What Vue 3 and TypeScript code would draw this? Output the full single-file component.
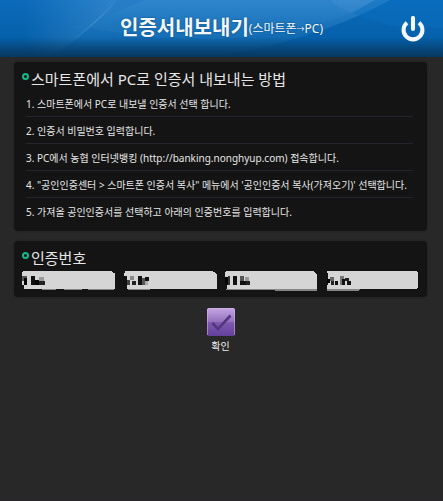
<script setup lang="ts">
import { reactive } from 'vue'

interface Block {
  x: number
  y: number
  w: number
  h: number
  fill: string
}

interface CodeField {
  id: string
  value: string
  shape: string
  shade: string
  blocks: Block[]
}

const steps: string[] = [
  '스마트폰에서 PC로 내보낼 인증서 선택 합니다.',
  '인증서 비밀번호 입력합니다.',
  'PC에서 농협 인터넷뱅킹 (http://banking.nonghyup.com) 접속합니다.',
  '"공인인증센터 > 스마트폰 인증서 복사" 메뉴에서 \'공인인증서 복사(가져오기)\' 선택합니다.',
  '가져올 공인인증서를 선택하고 아래의 인증번호를 입력합니다.',
]

const b = (x: number, y: number, w: number, h: number, fill: string): Block => ({ x, y, w, h, fill })

const fields = reactive<CodeField[]>([
  {
    id: 'code-1',
    value: '',
    shape: 'M2 0H90L94 3V18H2V14H0V2Z',
    shade: 'M20 18H34V19H20ZM42 18H60V19H42ZM66 18H92V19H66Z',
    blocks: [
      b(0, 5, 5, 5, '#555'), b(2, 7, 3, 7, '#050505'), b(9, 5, 4, 9, '#111'),
      b(13, 9, 4, 5, '#080808'), b(17, 6, 5, 4, '#999'), b(17, 10, 6, 4, '#222'),
    ],
  },
  {
    id: 'code-2',
    value: '',
    shape: 'M1 0H89L93 3V18H3V14H0V5Z',
    shade: 'M4 18H26V19H4Z',
    blocks: [
      b(0, 5, 3, 9, '#111'), b(3, 9, 3, 5, '#444'), b(6, 5, 4, 4, '#888'),
      b(8, 10, 4, 4, '#222'), b(14, 5, 4, 9, '#111'), b(18, 7, 3, 7, '#555'),
      b(21, 6, 4, 4, '#111'), b(21, 10, 3, 4, '#aaa'),
    ],
  },
  {
    id: 'code-3',
    value: '',
    shape: 'M1 0H89L92 3V18H2V14H0V2Z',
    shade: 'M1 18H92V20H50V19H1Z',
    blocks: [
      b(0, 6, 3, 8, '#050505'), b(3, 5, 2, 9, '#333'), b(8, 5, 4, 9, '#111'),
      b(15, 5, 4, 5, '#555'), b(15, 10, 6, 4, '#111'), b(20, 6, 4, 4, '#999'),
      b(21, 10, 4, 4, '#222'),
    ],
  },
  {
    id: 'code-4',
    value: '',
    shape: 'M0 0H90L91 1V17L90 18H0V14H1V3Z',
    shade: 'M0 18H34L32 20H0Z',
    blocks: [
      b(0, 8, 3, 4, '#050505'), b(3, 6, 4, 4, '#666'), b(4, 10, 3, 4, '#222'),
      b(8, 10, 3, 4, '#111'), b(13, 5, 4, 9, '#777'), b(15, 8, 3, 6, '#111'),
      b(18, 7, 4, 3, '#222'), b(20, 10, 4, 4, '#111'),
    ],
  },
])
</script>

<template>
  <div class="page">
    <header class="header">
      <svg class="backdrop" viewBox="0 0 443 57" preserveAspectRatio="none" aria-hidden="true">
        <defs>
          <linearGradient id="sky" x1="0" y1="0" x2="0" y2="1">
            <stop offset="0" stop-color="#0b6abb" />
            <stop offset="0.7" stop-color="#0560aa" />
            <stop offset="1" stop-color="#06569a" />
          </linearGradient>
          <linearGradient id="glow" x1="0" y1="0" x2="0" y2="1">
            <stop offset="0" stop-color="#8cc8f4" stop-opacity="0.26" />
            <stop offset="1" stop-color="#5aaee8" stop-opacity="0.04" />
          </linearGradient>
          <linearGradient id="beam" x1="0" y1="0" x2="1" y2="0">
            <stop offset="0.2" stop-color="#8cc8f4" stop-opacity="0" />
            <stop offset="1" stop-color="#8cc8f4" stop-opacity="0.28" />
          </linearGradient>
          <linearGradient id="floor" x1="0" y1="0" x2="0" y2="1">
            <stop offset="0.65" stop-color="#06375f" stop-opacity="0" />
            <stop offset="1" stop-color="#06375f" stop-opacity="0.95" />
          </linearGradient>
        </defs>
        <rect width="443" height="57" fill="url(#sky)" />
        <path d="M0 0H117Q92 30 50 57H0Z" fill="url(#beam)" />
        <path d="M88 27Q110 12 145 0H390Q310 44 205 57H52Q72 42 88 27Z" fill="url(#glow)" />
        <path d="M30 32Q60 31 80 26Q140 40 221 39Q300 32 352 13L330 0H145Q110 12 88 27Z" fill="#5aaee8" opacity="0.08" />
        <path d="M117 0H145Q110 12 88 27Q103 15 117 0Z" fill="#8cc8f4" opacity="0.22" />
        <path d="M330 0H375L352 13Q340 8 330 0Z" fill="#8cc8f4" opacity="0.12" />
        <path d="M352 13Q376 25 410 28H443V0H375Z" fill="#0a70c0" opacity="0.4" />
        <rect width="443" height="57" fill="url(#floor)" />
      </svg>
      <h1 class="title">인증서내보내기<small>(스마트폰<span class="arrow">→</span>PC)</small></h1>
      <button class="power" type="button" aria-label="종료">
        <svg viewBox="0 0 26 28" width="24" height="26" aria-hidden="true">
          <path d="M6.5 7.2A10.2 10.2 0 1 0 19.5 7.2" fill="none" stroke="#f4f8fc" stroke-width="4.4" />
          <path d="M13 2V14" stroke="#f4f8fc" stroke-width="4.4" stroke-linecap="round" />
        </svg>
      </button>
    </header>

    <main class="content">
      <section class="panel guide">
        <h2 class="heading">스마트폰에서 PC로 인증서 내보내는 방법</h2>
        <ol class="steps">
          <li v-for="(step, i) in steps" :key="i">{{ i + 1 }}. {{ step }}</li>
        </ol>
      </section>

      <section class="panel code">
        <h2 class="heading">인증번호</h2>
        <div class="fields">
          <label v-for="(field, i) in fields" :key="field.id" class="field" :for="field.id">
            <svg class="mask" viewBox="0 0 93 21" preserveAspectRatio="none" shape-rendering="crispEdges" aria-hidden="true">
              <path :d="field.shade" fill="#858585" />
              <path :d="field.shape" fill="#d5d5d5" />
              <rect
                v-for="(block, n) in field.blocks"
                :key="n"
                :x="block.x"
                :y="block.y"
                :width="block.w"
                :height="block.h"
                :fill="block.fill"
              />
            </svg>
            <input :id="field.id" v-model="field.value" type="text" :aria-label="`인증번호 ${i + 1}`" />
          </label>
        </div>
      </section>

      <button class="confirm" type="button">
        <svg viewBox="0 0 30 30" width="30" height="30" aria-hidden="true">
          <defs>
            <linearGradient id="violet" x1="0" y1="0" x2="0" y2="1">
              <stop offset="0" stop-color="#c6a6e4" />
              <stop offset="0.5" stop-color="#9270bd" />
              <stop offset="0.52" stop-color="#8059b0" />
              <stop offset="1" stop-color="#62419a" />
            </linearGradient>
          </defs>
          <rect x="1" y="1" width="28" height="28" rx="2" fill="url(#violet)" />
          <path d="M1.5 28V3Q1.5 1.5 3 1.5H27Q28.5 1.5 28.5 3V28" fill="none" stroke="#d2bae8" stroke-opacity="0.5" />
          <path d="M6.5 16L12 22L24.5 8.5" fill="none" stroke="#543781" stroke-width="2.6" />
        </svg>
        <span>확인</span>
      </button>
    </main>
  </div>
</template>

<style>
body {
  margin: 0;
  background: #282828;
}
</style>

<style scoped>
.page {
  box-sizing: border-box;
  min-height: 100vh;
  border-bottom: 2px solid #2c272b;
  background: #282828;
  color: #e6e6e6;
  font-family: "Noto Sans", "Noto Sans CJK KR", sans-serif;
}

.header {
  position: relative;
  display: grid;
  grid-template-columns: 1fr auto 1fr;
  align-items: center;
  height: 57px;
  padding: 0 18px;
}

.backdrop {
  position: absolute;
  inset: 0;
  width: 100%;
  height: 100%;
}

.title {
  position: relative;
  grid-column: 2;
  margin: 0;
  color: #f4f8fc;
  font-size: 20px;
  font-weight: 700;
  line-height: 28px;
  white-space: nowrap;
  text-shadow: 0 0 2px #08477d;
}

.title small {
  font-size: 12px;
  font-weight: 400;
  vertical-align: 2px;
}

.arrow {
  font-size: 8px;
  vertical-align: 1px;
}

.power {
  position: relative;
  justify-self: end;
  display: flex;
  padding: 0;
  border: 0;
  background: none;
  cursor: pointer;
}

.content {
  display: flex;
  flex-direction: column;
  gap: 10px;
  padding: 5px 16px 0 14px;
}

.panel {
  border-radius: 4px;
  background: #141414;
  box-shadow: 0 0 2px #1c1c1c;
}

.guide {
  padding: 5px 14px 7px 8px;
}

.code {
  padding: 5px 8px 8px;
}

.heading {
  display: flex;
  gap: 2px;
  margin: 0;
  font-size: 15px;
  font-weight: 400;
  line-height: 24px;
  white-space: nowrap;
}

.heading::before {
  content: "";
  box-sizing: border-box;
  width: 7px;
  height: 7px;
  margin-top: 6px;
  border: 2px solid #18b786;
  border-radius: 50%;
}

.steps {
  margin: 0;
  padding: 0 0 0 4px;
  list-style: none;
  font-size: 10px;
  line-height: 23px;
}

.steps li {
  padding-top: 2px;
  white-space: nowrap;
}

.steps li + li {
  padding-top: 3px;
  border-top: 1px solid #24242c;
}

.fields {
  display: grid;
  grid-template-columns: repeat(4, 1fr);
  gap: 9px;
  padding-top: 1px;
}

.field {
  position: relative;
  display: flex;
}

.field input {
  position: relative;
  box-sizing: border-box;
  width: 100%;
  min-width: 0;
  height: 18px;
  padding: 0 4px;
  border: 0;
  outline: 0;
  background: transparent;
  color: #111;
  font-size: 12px;
}

.mask {
  position: absolute;
  top: 0;
  left: 0;
  width: 100%;
  height: 21px;
  overflow: visible;
}

.confirm {
  display: flex;
  flex-direction: column;
  align-items: center;
  align-self: center;
  gap: 2px;
  padding: 0;
  border: 0;
  background: none;
  color: #f0f0f0;
  font-family: inherit;
  font-size: 10px;
  line-height: 14px;
  cursor: pointer;
}
</style>
